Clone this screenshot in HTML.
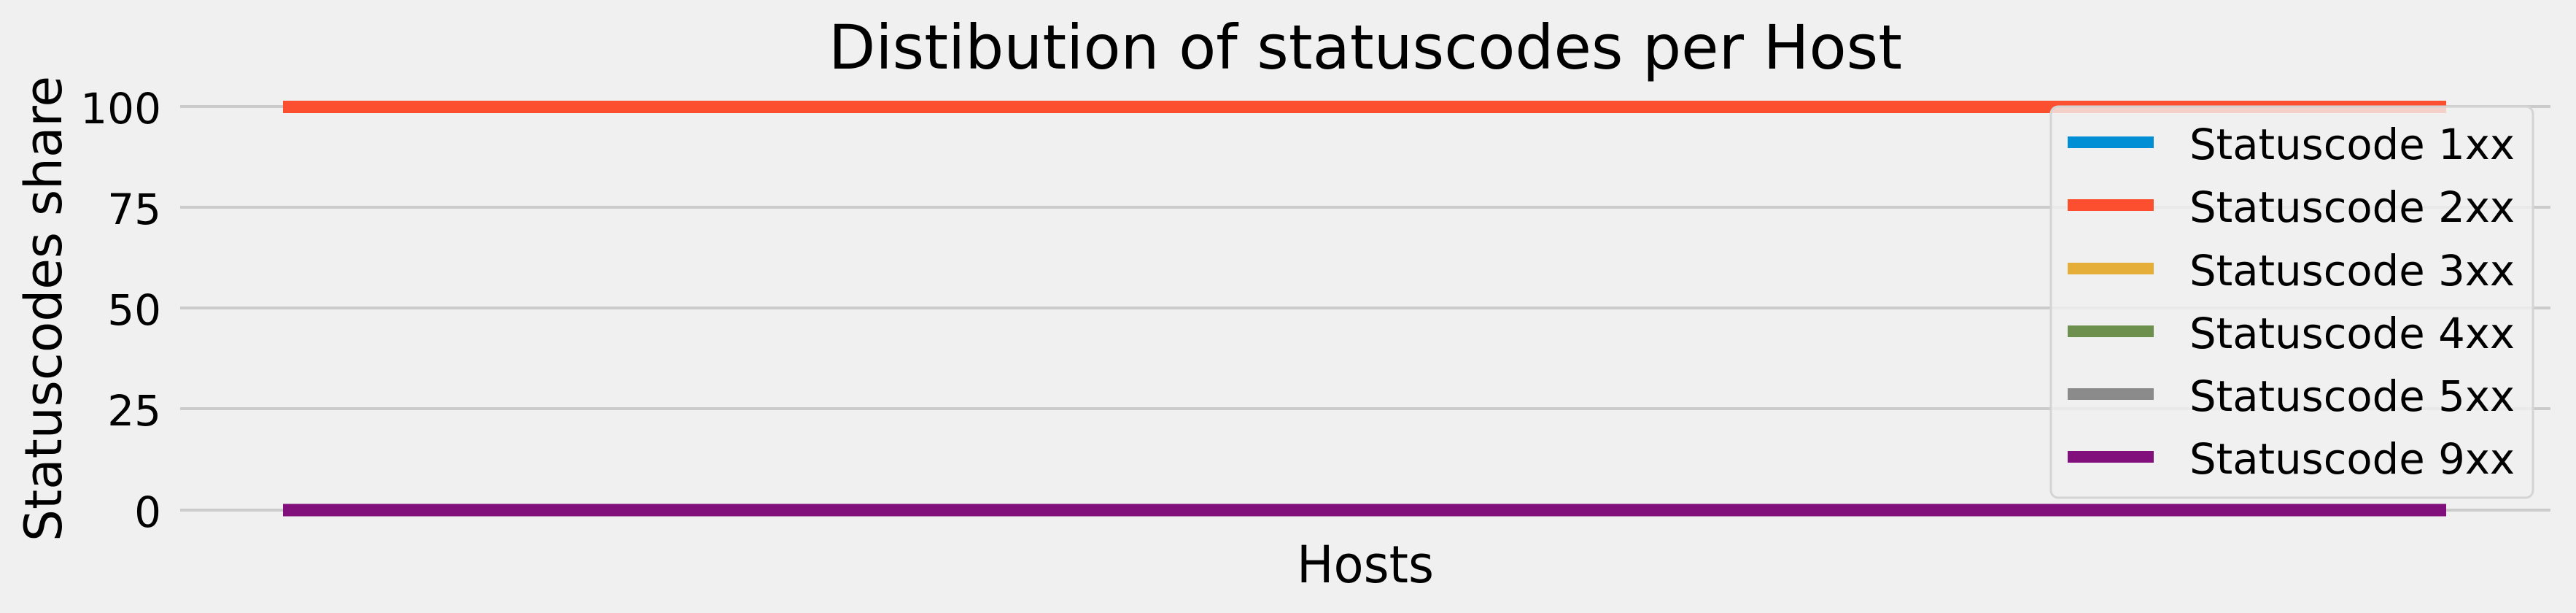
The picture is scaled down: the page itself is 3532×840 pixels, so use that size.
<!DOCTYPE html>
<html><head><meta charset="utf-8"><style>
html,body{margin:0;padding:0;background:#f0f0f0;}
svg{display:block;}
text{font-family:"DejaVu Sans","Liberation Sans",sans-serif;fill:#000;}
</style></head><body>
<svg width="3532" height="840" viewBox="0 0 3532 840" xmlns="http://www.w3.org/2000/svg">
<rect width="3532" height="840" fill="#f0f0f0"/>
<g stroke="#cbcbcb" stroke-width="4">
<line x1="247" y1="146" x2="3497" y2="146"/>
<line x1="247" y1="284" x2="3497" y2="284"/>
<line x1="247" y1="422" x2="3497" y2="422"/>
<line x1="247" y1="560" x2="3497" y2="560"/>
<line x1="247" y1="699" x2="3497" y2="699"/>
</g>
<g font-size="58" text-anchor="end">
<text x="221" y="169">100</text>
<text x="221" y="307">75</text>
<text x="221" y="445">50</text>
<text x="221" y="583">25</text>
<text x="221" y="722">0</text>
</g>
<line x1="388" y1="146.5" x2="3354" y2="146.5" stroke="#fc4f30" stroke-width="17"/>
<line x1="388" y1="699" x2="3354" y2="699" stroke="#810f7c" stroke-width="17"/>
<text x="1872" y="94" font-size="84" text-anchor="middle" textLength="1472" lengthAdjust="spacingAndGlyphs">Distibution of statuscodes per Host</text>
<text x="1872" y="798" font-size="70" text-anchor="middle" textLength="188" lengthAdjust="spacingAndGlyphs">Hosts</text>
<text transform="translate(84,423) rotate(-90)" x="0" y="0" font-size="70" text-anchor="middle" textLength="638" lengthAdjust="spacingAndGlyphs">Statuscodes share</text>
<rect x="2812" y="146" width="661" height="536" rx="10" fill="#f0f0f0" fill-opacity="0.8" stroke="#d4d4d4" stroke-width="3"/>
<g stroke-width="16">
<line x1="2835" y1="195" x2="2953" y2="195" stroke="#008fd5"/>
<line x1="2835" y1="281" x2="2953" y2="281" stroke="#fc4f30"/>
<line x1="2835" y1="368" x2="2953" y2="368" stroke="#e5ae38"/>
<line x1="2835" y1="454" x2="2953" y2="454" stroke="#6d904f"/>
<line x1="2835" y1="540" x2="2953" y2="540" stroke="#8b8b8b"/>
<line x1="2835" y1="626" x2="2953" y2="626" stroke="#810f7c"/>
</g>
<g font-size="58">
<text x="3002" y="218" textLength="446" lengthAdjust="spacingAndGlyphs">Statuscode 1xx</text>
<text x="3002" y="304" textLength="446" lengthAdjust="spacingAndGlyphs">Statuscode 2xx</text>
<text x="3002" y="391" textLength="446" lengthAdjust="spacingAndGlyphs">Statuscode 3xx</text>
<text x="3002" y="477" textLength="446" lengthAdjust="spacingAndGlyphs">Statuscode 4xx</text>
<text x="3002" y="563" textLength="446" lengthAdjust="spacingAndGlyphs">Statuscode 5xx</text>
<text x="3002" y="649" textLength="446" lengthAdjust="spacingAndGlyphs">Statuscode 9xx</text>
</g>
</svg>
</body></html>
